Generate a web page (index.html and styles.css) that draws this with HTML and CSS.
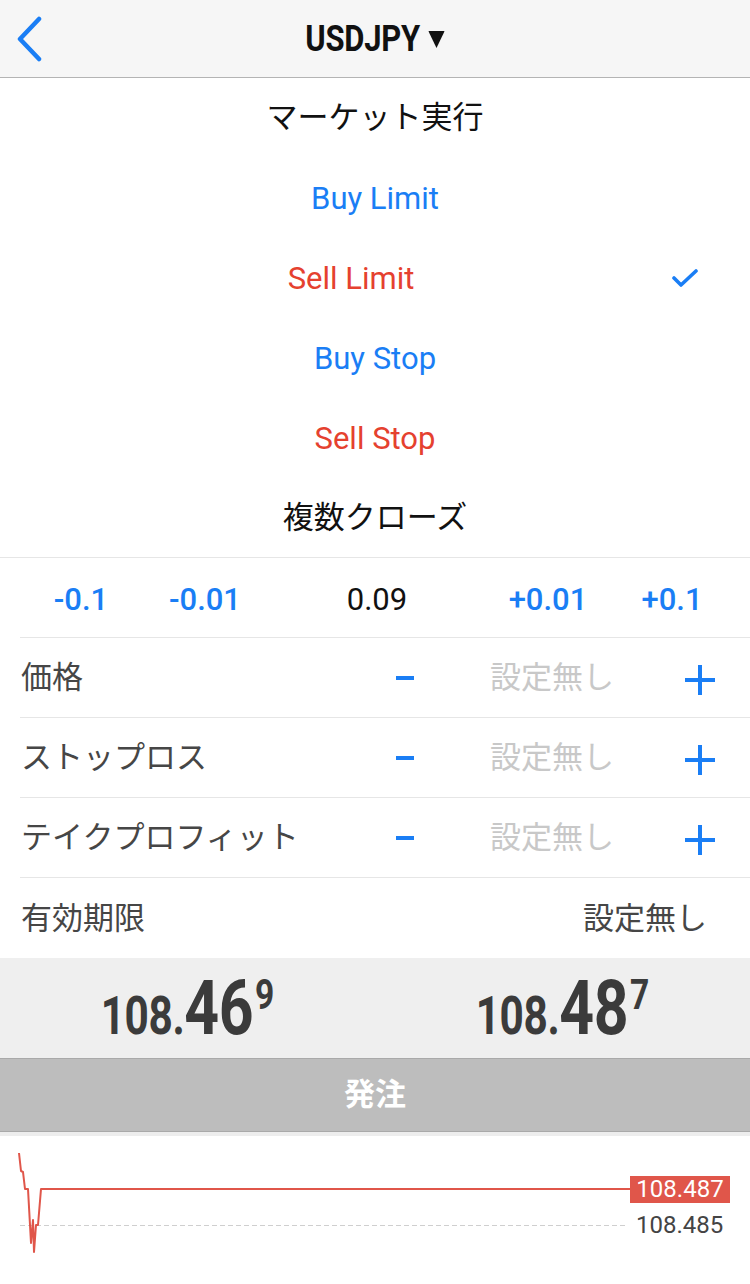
FILE: index.html
```html
<!DOCTYPE html>
<html lang="ja">
<head>
<meta charset="utf-8">
<title>USDJPY</title>
<link rel="stylesheet" href="styles.css">
</head>
<body>
<header class="nav">
  <div class="back">
    <svg width="30" height="46" viewBox="0 0 30 46"><polyline points="25,3 6,23 25,43" fill="none" stroke="#1a7ef5" stroke-width="4.5" stroke-linecap="round" stroke-linejoin="round"/></svg>
  </div>
  <div class="title"><span class="title-text">USDJPY<svg class="caret" width="19" height="17" viewBox="0 0 19 17"><polygon points="0,0 19,0 9.5,17" fill="#111"/></svg></span></div>
  <div></div>
</header>

<ul class="menu">
  <li class="menu-item dark">マーケット実行</li>
  <li class="menu-item buy">Buy Limit</li>
  <li class="menu-item sell selected">Sell Limit<svg class="check" width="26" height="20" viewBox="0 0 26 20"><polyline points="2,10 9,17 24,3" fill="none" stroke="#1a7ef5" stroke-width="3.6" stroke-linecap="round" stroke-linejoin="round"/></svg></li>
  <li class="menu-item buy">Buy Stop</li>
  <li class="menu-item sell">Sell Stop</li>
  <li class="menu-item dark last">複数クローズ</li>
</ul>

<div class="lots">
  <span class="step">-0.1</span>
  <span class="step">-0.01</span>
  <span class="lot-value">0.09</span>
  <span class="step">+0.01</span>
  <span class="step">+0.1</span>
</div>

<div class="field">
  <span class="label">価格</span>
  <span class="minus"><i></i></span>
  <span class="value">設定無し</span>
  <span class="plus"><svg width="32" height="32" viewBox="0 0 32 32"><path d="M16 1V31M1 16H31" stroke="#1a7ef5" stroke-width="4"/></svg></span>
</div>
<div class="field">
  <span class="label">ストップロス</span>
  <span class="minus"><i></i></span>
  <span class="value">設定無し</span>
  <span class="plus"><svg width="32" height="32" viewBox="0 0 32 32"><path d="M16 1V31M1 16H31" stroke="#1a7ef5" stroke-width="4"/></svg></span>
</div>
<div class="field">
  <span class="label">テイクプロフィット</span>
  <span class="minus"><i></i></span>
  <span class="value">設定無し</span>
  <span class="plus"><svg width="32" height="32" viewBox="0 0 32 32"><path d="M16 1V31M1 16H31" stroke="#1a7ef5" stroke-width="4"/></svg></span>
</div>
<div class="expiry">
  <span class="label">有効期限</span>
  <span class="expiry-value">設定無し</span>
</div>

<div class="prices">
  <div class="price-cell"><span class="price"><span class="p-small">108.</span><span class="p-big">46</span><span class="p-sup">9</span></span></div>
  <div class="price-cell"><span class="price"><span class="p-small">108.</span><span class="p-big">48</span><span class="p-sup">7</span></span></div>
</div>

<div class="order"><span class="order-text">発注</span></div>
<div class="strip"></div>

<div class="chart">
  <svg class="chart-svg" width="750" height="148" viewBox="0 0 750 148">
    <line x1="20" y1="89.5" x2="628" y2="89.5" stroke="#cfcfcf" stroke-width="1" stroke-dasharray="5 3"/>
    <polyline points="19,17 21,35 23,36 25,53 28,53 31,107 33,84 34,116 36,89 38,89 41,53 632,53" fill="none" stroke="#e0564a" stroke-width="2" stroke-linejoin="round"/>
  </svg>
  <span class="tag ask">108.487</span>
  <span class="tag bid">108.485</span>
</div>
</body>
</html>
```

FILE: styles.css
```css
html, body {
  margin: 0;
  padding: 0;
}
body {
  width: 750px;
  height: 1284px;
  overflow: hidden;
  background: #ffffff;
  font-family: Roboto, "Noto Sans CJK JP", sans-serif;
  color: #111;
}

/* nav */
.nav {
  height: 77px;
  border-bottom: 1px solid #b4b4b4;
  background: #f6f6f6;
  display: grid;
  grid-template-columns: 80px 1fr 80px;
  align-items: center;
}
.back {
  padding-left: 14px;
  display: flex;
  align-items: center;
}
.title {
  display: flex;
  justify-content: center;
}
.title-text {
  display: inline-flex;
  align-items: center;
  font-size: 36px;
  font-weight: 700;
  color: #111;
  transform: scaleX(0.86);
  letter-spacing: -0.3px;
}
.caret {
  margin-left: 10px;
  margin-top: 2px;
}

/* menu */
.menu {
  list-style: none;
  margin: 0;
  padding: 0;
}
.menu-item {
  height: 80px;
  display: flex;
  align-items: center;
  justify-content: center;
  font-size: 31px;
  box-sizing: border-box;
}
.menu-item.dark {
  color: #111;
  padding-bottom: 7px;
}
.menu-item.buy { color: #1a7ef5; }
.menu-item.sell { color: #e5412f; }
.menu-item.selected {
  position: relative;
  padding-right: 48px;
}
.check {
  position: absolute;
  right: 52px;
  top: 30px;
}
.menu-item.last {
  border-bottom: 1px solid #e6e6e6;
}

/* lots */
.lots {
  margin-left: 20px;
  height: 80px;
  box-sizing: border-box;
  border-bottom: 1px solid #e6e6e6;
  display: grid;
  grid-template-columns: 122px 126px 218px 124px 124px;
  align-items: center;
  font-size: 31px;
  padding-top: 3px;
}
.step {
  text-align: center;
  color: #1a7ef5;
  font-weight: 500;
}
.lot-value {
  text-align: center;
  color: #111;
}

/* fields */
.field {
  margin-left: 20px;
  padding: 0 14px 0 1px;
  height: 80px;
  box-sizing: border-box;
  border-bottom: 1px solid #e6e6e6;
  display: grid;
  grid-template-columns: 1fr 70px 224px 72px;
  align-items: center;
  font-size: 31px;
}
.label {
  color: #464646;
  font-size: 31px;
  margin-bottom: 6px;
}
.minus {
  display: flex;
  justify-content: center;
}
.minus i {
  display: block;
  width: 18px;
  height: 4px;
  background: #1a7ef5;
}
.value {
  text-align: center;
  color: #c8c8c8;
  margin-bottom: 6px;
}
.plus {
  display: flex;
  justify-content: center;
  margin-top: 4px;
}

.expiry {
  margin-left: 20px;
  padding: 0 43px 0 1px;
  height: 80px;
  display: flex;
  align-items: center;
  justify-content: space-between;
  font-size: 31px;
}
.expiry-value {
  color: #464646;
  margin-bottom: 6px;
}

/* prices */
.prices {
  height: 100px;
  background: #efefef;
  display: grid;
  grid-template-columns: 1fr 1fr;
}
.price-cell {
  display: flex;
  align-items: center;
  justify-content: center;
}
.price {
  display: inline-flex;
  align-items: baseline;
  font-weight: 700;
  color: #3b3b3b;
  line-height: 1;
  transform: scaleX(0.8);
  letter-spacing: -0.5px;
}
.p-small { font-size: 53px; }
.p-big { font-size: 76px; }
.p-sup {
  font-size: 42px;
  align-self: flex-start;
  margin-top: 4px;
  margin-left: 2px;
}

/* order button */
.order {
  height: 72px;
  border-top: 1px solid #a9a9a9;
  border-bottom: 1px solid #a9a9a9;
  background: #bdbdbd;
  color: #ffffff;
  font-size: 31px;
  font-weight: 700;
  display: flex;
  align-items: center;
  justify-content: center;
}
.order-text {
  margin-bottom: 8px;
}
.strip {
  height: 4px;
  background: #ededed;
}

/* chart */
.chart {
  position: relative;
  height: 148px;
}
.chart-svg {
  display: block;
}
.tag {
  position: absolute;
  font-size: 24px;
  line-height: 27px;
  height: 27px;
}
.tag.ask {
  left: 630px;
  top: 40px;
  width: 100px;
  text-align: center;
  background: #e0564a;
  color: #ffffff;
}
.tag.bid {
  left: 636px;
  top: 76px;
  color: #444;
}
```
